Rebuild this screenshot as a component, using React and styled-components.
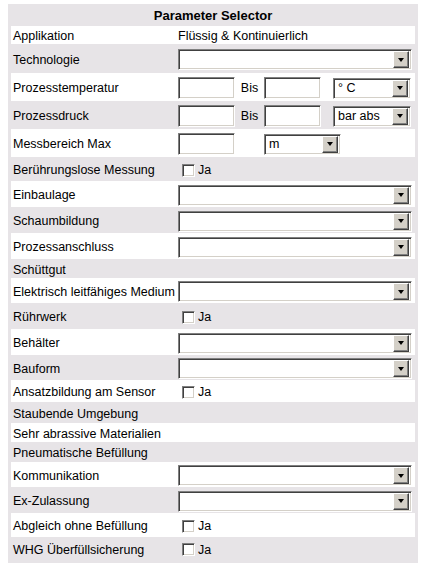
import React from "react";
import styled, { createGlobalStyle } from "styled-components";

const GlobalStyle = createGlobalStyle`
  body {
    margin: 4px 8px;
    background: #fff;
    font-family: "Liberation Sans", Arial, sans-serif;
    color: #000;
  }
`;

const sunken = `
  box-sizing: border-box;
  border-style: solid;
  border-width: 1px;
  border-color: #808080 #fff #fff #808080;
  box-shadow: inset 1px 1px 0 #404040, inset -1px -1px 0 #d4d0c8;
  background: #fff;
`;

const Panel = styled.div`
  width: 410px;
  box-sizing: border-box;
  background: #e7e4e7;
  padding: 0 3px 3px;
`;

const Title = styled.div`
  height: 22px;
  display: flex;
  align-items: center;
  justify-content: center;
  font-size: 13px;
  font-weight: bold;
`;

const Row = styled.div`
  display: grid;
  grid-template-columns: 167px 1fr;
  align-items: center;
  box-sizing: border-box;
  height: ${(p) => p.$h}px;
  padding-top: 2px;
  background: ${(p) => (p.$white ? "#fff" : "transparent")};
  font-size: 12.5px;
`;

const Label = styled.div`
  padding-left: 2px;
  white-space: nowrap;
`;

const Controls = styled.div`
  display: flex;
  align-items: center;
  white-space: nowrap;
`;

const Field = styled.input`
  ${sunken}
  width: 57px;
  height: 22px;
  margin: 0;
  padding: 0 3px;
  font: inherit;
  outline: none;
`;

const BisCell = styled.span`
  width: 29px;
  text-align: center;
`;

const Dropdown = styled.div`
  ${sunken}
  display: flex;
  align-items: center;
  width: ${(p) => p.$w}px;
  height: 21px;
  padding: 0 2px 0 4px;
  margin-left: ${(p) => p.$gap || 0}px;
`;

const ArrowButton = styled.span`
  margin-left: auto;
  width: 16px;
  height: 17px;
  box-sizing: border-box;
  background: #d4d0c8;
  border: 1px solid;
  border-color: #fff #404040 #404040 #fff;
  box-shadow: inset -1px -1px 0 #808080;
  display: flex;
  align-items: center;
  justify-content: center;
`;

const Triangle = styled.span`
  width: 0;
  height: 0;
  border-left: 3.5px solid transparent;
  border-right: 3.5px solid transparent;
  border-top: 4px solid #000;
`;

const CheckBox = styled.span`
  ${sunken}
  width: 13px;
  height: 13px;
  margin: 0 3px 0 4px;
`;

const rows = [
  { label: "Applikation", h: 18, kind: "text", value: "Flüssig & Kontinuierlich" },
  { label: "Technologie", h: 29, kind: "select" },
  { label: "Prozesstemperatur", h: 28, kind: "range", unit: "° C" },
  { label: "Prozessdruck", h: 28, kind: "range", unit: "bar abs" },
  { label: "Messbereich Max", h: 28, kind: "max", unit: "m" },
  { label: "Berührungslose Messung", h: 24, kind: "check" },
  { label: "Einbaulage", h: 26, kind: "select" },
  { label: "Schaumbildung", h: 26, kind: "select" },
  { label: "Prozessanschluss", h: 26, kind: "select" },
  { label: "Schüttgut", h: 19 },
  { label: "Elektrisch leitfähiges Medium", h: 25, kind: "select" },
  { label: "Rührwerk", h: 26, kind: "check" },
  { label: "Behälter", h: 26, kind: "select" },
  { label: "Bauform", h: 25, kind: "select" },
  { label: "Ansatzbildung am Sensor", h: 22, kind: "check" },
  { label: "Staubende Umgebung", h: 21 },
  { label: "Sehr abrassive Materialien", h: 19 },
  { label: "Pneumatische Befüllung", h: 20 },
  { label: "Kommunikation", h: 25, kind: "select" },
  { label: "Ex-Zulassung", h: 26, kind: "select" },
  { label: "Abgleich ohne Befüllung", h: 24, kind: "check" },
  { label: "WHG Überfüllsicherung", h: 23, kind: "check" },
];

const Select = ({ width, value, gap }) => (
  <Dropdown $w={width} $gap={gap}>
    {value}
    <ArrowButton>
      <Triangle />
    </ArrowButton>
  </Dropdown>
);

const renderControl = (row) => {
  switch (row.kind) {
    case "text":
      return row.value;
    case "select":
      return <Select width={234} />;
    case "range":
      return (
        <>
          <Field type="text" />
          <BisCell>Bis</BisCell>
          <Field type="text" />
          <Select width={78} gap={12} value={row.unit} />
        </>
      );
    case "max":
      return (
        <>
          <Field type="text" />
          <BisCell />
          <Select width={77} value={row.unit} />
        </>
      );
    case "check":
      return (
        <>
          <CheckBox />
          Ja
        </>
      );
    default:
      return null;
  }
};

const App = () => (
  <>
    <GlobalStyle />
    <Panel>
      <Title>Parameter Selector</Title>
      {rows.map((row, i) => (
        <Row key={row.label} $h={row.h} $white={i % 2 === 0}>
          <Label>{row.label}</Label>
          <Controls>{renderControl(row)}</Controls>
        </Row>
      ))}
    </Panel>
  </>
);

export default App;
